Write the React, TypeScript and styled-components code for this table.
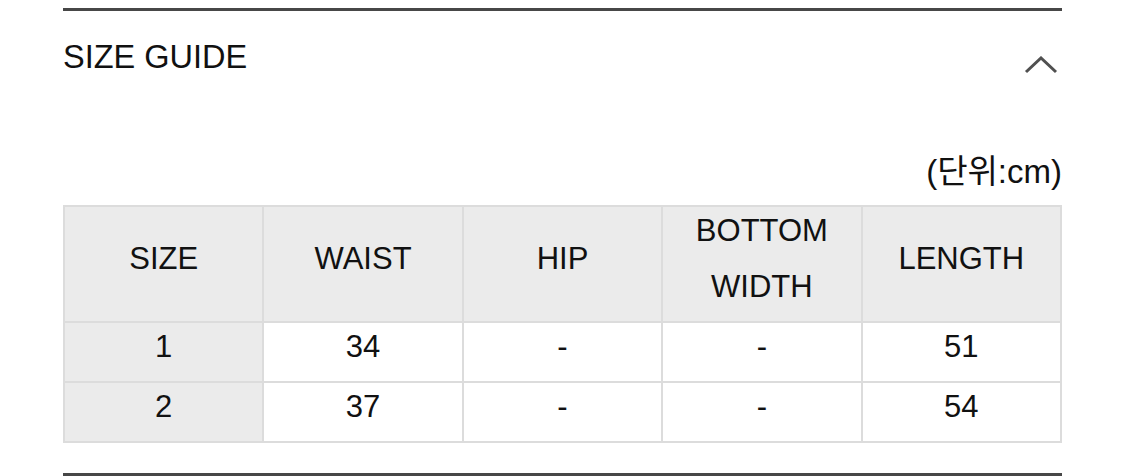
import React from "react";
import styled, { createGlobalStyle } from "styled-components";

const Global = createGlobalStyle`
  html, body { margin: 0; padding: 0; background: #fff; }
  body { font-family: "Liberation Sans", Arial, "Noto Sans CJK KR", sans-serif; color: #111; }
`;

const Page = styled.div`
  padding: 8px 63px 0;
`;

const Section = styled.section`
  border-top: 3px solid #474747;
  border-bottom: 3px solid #474747;
  padding-bottom: 30px;
`;

const Header = styled.div`
  height: 94px;
  display: flex;
  align-items: center;
  justify-content: space-between;
`;

const Title = styled.h2`
  margin: 0 0 2px;
  font-size: 32.5px;
  font-weight: 400;
`;

const Chevron = styled.svg`
  margin-top: 14px;
  margin-right: 4px;
`;

const Unit = styled.div`
  margin-top: 47px;
  text-align: right;
  font-size: 33px;
  line-height: 40px;
  font-family: "Liberation Sans", "Noto Sans CJK KR", sans-serif;
`;

const Table = styled.table`
  margin-top: 13px;
  width: 100%;
  border-collapse: collapse;
  table-layout: fixed;
  border: 2px solid #dcdcdc;
`;

const Th = styled.th`
  background: #ebebeb;
  border: 2px solid #dcdcdc;
  font-weight: 400;
  font-size: 31px;
  line-height: 56px;
  padding: 1px 0;
  text-align: center;
`;

const Td = styled.td<{ $head?: boolean }>`
  background: ${(p) => (p.$head ? "#ebebeb" : "#fff")};
  border: 2px solid #dcdcdc;
  font-size: 31px;
  line-height: 48px;
  padding: 0 0 10px;
  text-align: center;
`;

const Label = styled.span`
  position: relative;
  top: -5px;
`;

const headers = ["SIZE", "WAIST", "HIP", "BOTTOM\nWIDTH", "LENGTH"];
const rows = [
  ["1", "34", "-", "-", "51"],
  ["2", "37", "-", "-", "54"],
];

export default function App() {
  return (
    <Page>
      <Global />
      <Section>
        <Header>
          <Title>SIZE GUIDE</Title>
          <Chevron width="34" height="18" viewBox="0 0 34 18">
            <polyline points="2,16 17,2 32,16" fill="none" stroke="#505050" strokeWidth="3" />
          </Chevron>
        </Header>
        <Unit>(단위:cm)</Unit>
        <Table>
          <thead>
            <tr>
              {headers.map((h) => (
                <Th key={h}>
                  <Label>
                    {h.split("\n").map((l, i) => (
                      <React.Fragment key={i}>
                        {i > 0 && <br />}
                        {l}
                      </React.Fragment>
                    ))}
                  </Label>
                </Th>
              ))}
            </tr>
          </thead>
          <tbody>
            {rows.map((r) => (
              <tr key={r[0]}>
                {r.map((c, i) => (
                  <Td key={i} $head={i === 0}>
                    {c}
                  </Td>
                ))}
              </tr>
            ))}
          </tbody>
        </Table>
      </Section>
    </Page>
  );
}
